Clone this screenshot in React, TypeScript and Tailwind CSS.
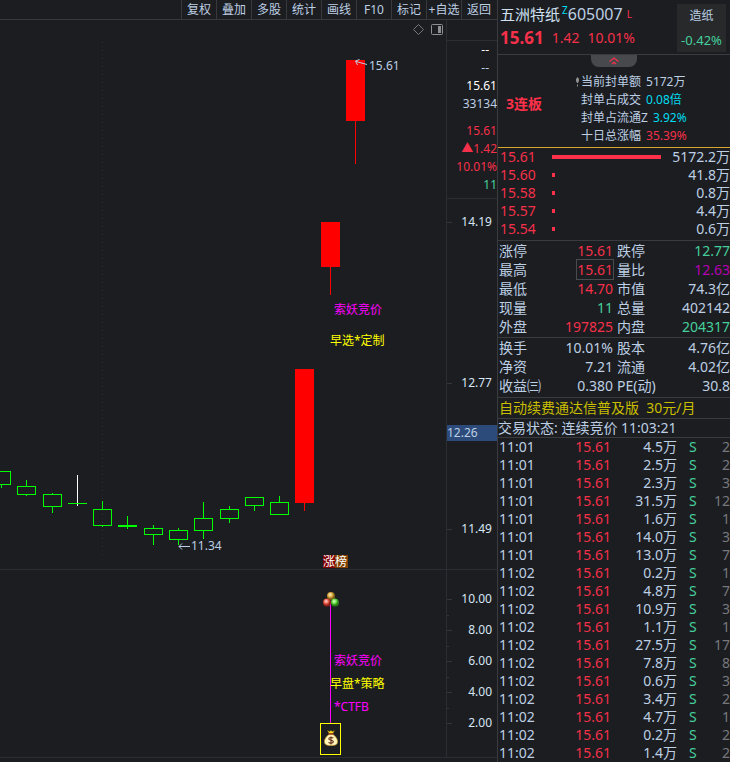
import { useState } from 'react';

const MENU = ['复权', '叠加', '多股', '统计', '画线', 'F10', '标记', '+自选', '返回'];

const RED = 'text-[#f5304a]';
const GREEN = 'text-[#45cf9c]';
const PLAIN = 'text-[#bccfe4]';

interface Candle {
  x: number;
  open: number;
  close: number;
  high: number;
  low: number;
  wick?: string;
}

// falling days, drawn hollow; open/close are the top and bottom of the body
const FALLING: Candle[] = [
  { x: 1, open: 471, close: 484, high: 471, low: 488 },
  { x: 26, open: 486, close: 494, high: 480, low: 496 },
  { x: 52, open: 494, close: 506, high: 493, low: 513 },
  { x: 77, open: 503, close: 503, high: 475, low: 506, wick: '#ffffff' },
  { x: 102, open: 509, close: 525, high: 501, low: 527 },
  { x: 127, open: 525, close: 526, high: 516, low: 529 },
  { x: 153, open: 528, close: 534, high: 525, low: 545 },
  { x: 178, open: 530, close: 539, high: 528, low: 545 },
  { x: 203, open: 518, close: 530, high: 502, low: 539 },
  { x: 229, open: 509, close: 518, high: 506, low: 523 },
  { x: 254, open: 497, close: 505, high: 497, low: 511 },
  { x: 279, open: 502, close: 514, high: 496, low: 514 },
];

const RISING: Candle[] = [
  { x: 304, open: 369, close: 503, high: 369, low: 511 },
  { x: 330, open: 222, close: 267, high: 222, low: 295 },
  { x: 355, open: 60, close: 121, high: 60, low: 164 },
];

const QUOTE = [
  { text: '--', color: 'text-white' },
  { text: '--', color: PLAIN },
  { text: '15.61', color: 'text-white' },
  { text: '33134', color: PLAIN },
  { text: '15.61', color: RED },
  { text: '▲1.42', color: RED },
  { text: '10.01%', color: RED },
  { text: '11', color: GREEN },
];

const ORDERS = [
  { price: '15.61', volume: '5172.2万', bar: 109 },
  { price: '15.60', volume: '41.8万', bar: 3 },
  { price: '15.58', volume: '0.8万', bar: 3 },
  { price: '15.57', volume: '4.4万', bar: 3 },
  { price: '15.54', volume: '0.6万', bar: 3 },
];

const LIMIT_INFO = [
  { label: '当前封单额', value: '5172万', color: PLAIN },
  { label: '封单占成交', value: '0.08倍', color: 'text-[#00dcf0]' },
  { label: '封单占流通Z', value: '3.92%', color: 'text-[#00dcf0]' },
  { label: '十日总涨幅', value: '35.39%', color: RED },
];

type Stat = [string, string, string, string, string, string];

const STATS_A: Stat[] = [
  ['涨停', '15.61', RED, '跌停', '12.77', GREEN],
  ['最高', '15.61', RED, '量比', '12.63', 'text-[#b400b4]'],
  ['最低', '14.70', RED, '市值', '74.3亿', PLAIN],
  ['现量', '11', GREEN, '总量', '402142', PLAIN],
  ['外盘', '197825', RED, '内盘', '204317', GREEN],
];

const STATS_B: Stat[] = [
  ['换手', '10.01%', PLAIN, '股本', '4.76亿', PLAIN],
  ['净资', '7.21', PLAIN, '流通', '4.02亿', PLAIN],
  ['收益㈢', '0.380', PLAIN, 'PE(动)', '30.8', PLAIN],
];

const TICKS = [
  ['11:01', '4.5万', '2'],
  ['11:01', '2.5万', '2'],
  ['11:01', '2.3万', '3'],
  ['11:01', '31.5万', '12'],
  ['11:01', '1.6万', '1'],
  ['11:01', '14.0万', '3'],
  ['11:01', '13.0万', '7'],
  ['11:02', '0.2万', '1'],
  ['11:02', '4.8万', '7'],
  ['11:02', '10.9万', '3'],
  ['11:02', '1.1万', '1'],
  ['11:02', '27.5万', '17'],
  ['11:02', '7.8万', '8'],
  ['11:02', '0.6万', '3'],
  ['11:02', '3.4万', '2'],
  ['11:02', '4.7万', '1'],
  ['11:02', '0.2万', '2'],
  ['11:02', '1.4万', '2'],
];

function FallingCandle({ c }: { c: Candle }) {
  const wick = c.wick || '#00ff00';
  return (
    <g stroke="#00ff00" fill="none">
      <path d={`M${c.x + 0.5} ${c.high}V${c.open}M${c.x + 0.5} ${c.close}V${c.low}`} stroke={wick} />
      {c.open === c.close ? (
        <>
          <path d={`M${c.x + 0.5} ${c.high}V${c.low}`} stroke={wick} />
          <path d={`M${c.x - 9} ${c.open + 0.5}h19`} />
        </>
      ) : (
        <rect x={c.x - 8.5} y={c.open + 0.5} width={18} height={c.close - c.open} />
      )}
    </g>
  );
}

function KLineChart() {
  return (
    <svg width="446" height="549" viewBox="0 20 446 549" className="shrink-0 text-xs" shapeRendering="crispEdges">
      <path d="M102.5 42V557" stroke="#2b2c31" strokeDasharray="1 3" />
      {FALLING.map((c) => (
        <FallingCandle key={c.x} c={c} />
      ))}
      {RISING.map((c) => (
        <g key={c.x}>
          <rect x={c.x - 9} y={c.open} width={19} height={c.close - c.open} fill="#ff0000" />
          <path d={`M${c.x + 0.5} ${c.close}V${c.low}`} stroke="#ff0000" />
        </g>
      ))}

      {/* high and low marks */}
      <g stroke="#bccfe4" fill="none" shapeRendering="auto">
        <path d="M367 64.5L356 61.5M359.5 59.5L355.5 61L357.5 65" />
        <path d="M179 546.5H190M182 543.5L179 546.5L182 549.5" />
      </g>
      <text x="369" y="70" fill="#bccfe4">15.61</text>
      <text x="191" y="550" fill="#bccfe4">11.34</text>

      <text x="334" y="314" fill="#ff00ff">索妖竞价</text>
      <text x="330" y="345" fill="#ffff00">早选*定制</text>

      <rect x="323" y="555" width="12" height="13" fill="#800000" />
      <rect x="335" y="555" width="13" height="13" fill="#804000" />
      <text x="323" y="566" fill="#ffffff">涨榜</text>
    </svg>
  );
}

function SignalChart() {
  return (
    <svg width="446" height="187" viewBox="0 570 446 187" className="shrink-0 text-xs">
      <defs>
        <radialGradient id="gold" cx="0.4" cy="0.35">
          <stop offset="0" stopColor="#fff4c8" />
          <stop offset="0.6" stopColor="#d8a840" />
          <stop offset="1" stopColor="#806018" />
        </radialGradient>
        <radialGradient id="red" cx="0.4" cy="0.35">
          <stop offset="0" stopColor="#ffe0dc" />
          <stop offset="0.6" stopColor="#e85848" />
          <stop offset="1" stopColor="#902018" />
        </radialGradient>
        <radialGradient id="green" cx="0.4" cy="0.35">
          <stop offset="0" stopColor="#e8ffd4" />
          <stop offset="0.6" stopColor="#60d840" />
          <stop offset="1" stopColor="#287c18" />
        </radialGradient>
      </defs>
      <path d="M330.5 604V723" stroke="#ff00ff" />
      <circle cx="331" cy="596" r="4" fill="url(#gold)" />
      <circle cx="327" cy="602.5" r="4" fill="url(#red)" />
      <circle cx="335" cy="602.5" r="4" fill="url(#green)" />

      <text x="334" y="665" fill="#ff00ff">索妖竞价</text>
      <text x="330" y="688" fill="#ffff00">早盘*策略</text>
      <text x="334" y="711" fill="#ff00ff">*CTFB</text>

      {/* money bag */}
      <rect x="320.5" y="723.5" width="20" height="31" fill="none" stroke="#ffff00" />
      <path d="M327.5 730.5L329 733.5H333L334.5 730.5L332.5 731.5L331 730.5L329.5 731.5Z" fill="#f8e020" stroke="#806010" strokeWidth="0.5" />
      <path d="M329 734.5H333C335.5 736 337.5 739 337.5 741.5C337.5 744.5 335.5 745.5 331 745.5C326.5 745.5 324.5 744.5 324.5 741.5C324.5 739 326.5 736 329 734.5Z" fill="#fff4bc" stroke="#d0a028" strokeWidth="0.7" />
      <path d="M328.5 734H333.5" stroke="#b03018" />
      <path d="M333.3 738.2C332.3 737.2 328.8 737.2 328.8 739C328.8 740.7 333.4 739.9 333.4 741.8C333.4 743.5 329.5 743.5 328.5 742.3M331 736.5V744.5" fill="none" stroke="#602818" strokeWidth="1.1" />
    </svg>
  );
}

function PriceAxis() {
  return (
    <svg width="50" height="370" viewBox="0 199 50 370" className="block text-xs">
      <path d="M0 222.5H5M0 383.5H5M0 529.5H5" stroke="#33343c" />
      <g fill="#d6e6f5" textAnchor="end">
        <text x="45" y="226">14.19</text>
        <text x="45" y="387">12.77</text>
        <text x="45" y="533">11.49</text>
      </g>
      <rect x="0" y="425" width="50" height="16" fill="#2c4a7a" />
      <text x="0" y="437" fill="#bccfe4">12.26</text>
    </svg>
  );
}

function SignalAxis() {
  return (
    <svg width="50" height="187" viewBox="0 570 50 187" className="block text-xs">
      {[10, 8, 6, 4, 2].map((v, i) => (
        <g key={v}>
          <path d={`M0 ${599.5 + i * 31}h5`} stroke="#33343c" />
          {i < 4 && <path d={`M0 ${615.5 + i * 31}h2`} stroke="#33343c" />}
          <text x="45" y={603 + i * 31} textAnchor="end" fill="#d6e6f5">
            {v.toFixed(2)}
          </text>
        </g>
      ))}
    </svg>
  );
}

function StatTable({ rows, boxed }: { rows: Stat[]; boxed?: string }) {
  return (
    <table className="w-full table-fixed border-collapse text-sm leading-[19px]">
      <tbody>
        {rows.map(([label, value, color, label2, value2, color2]) => (
          <tr key={label}>
            <th className="w-[46px] p-0 pl-px text-left font-normal whitespace-nowrap">{label}</th>
            <td className={`w-[69px] p-0 text-right ${color}`}>
              <span className={label === boxed ? 'outline outline-[#4a4b4e]' : ''}>{value}</span>
            </td>
            <th className="w-[50px] p-0 pl-1 text-left font-normal whitespace-nowrap">{label2}</th>
            <td className={`p-0 text-right ${color2}`}>{value2}</td>
          </tr>
        ))}
      </tbody>
    </table>
  );
}

export default function App() {
  const [open, setOpen] = useState(true);

  return (
    <div className="flex min-h-screen overflow-hidden bg-[#1c1d20] font-['Noto_Sans','Noto_Sans_CJK_SC',sans-serif] text-[#bccfe4]">
      <main className="min-w-0 flex-1">
        <nav className="flex h-5 justify-end border-b border-[#38393c] pr-px text-xs">
          {MENU.map((item) => (
            <button
              key={item}
              className="flex w-[35px] items-center justify-center border-l border-[#38393c] leading-4 whitespace-nowrap hover:text-white"
            >
              {item}
            </button>
          ))}
        </nav>

        <div className="flex border-b border-[#2c2d33]">
          <section className="relative flex min-w-0 flex-1 justify-end overflow-hidden">
            <KLineChart />
            <div className="absolute top-[3px] right-0.5 flex items-center gap-1.5">
              <button aria-label="标注">
                <svg width="13" height="13" viewBox="0 0 13 13" className="block" fill="none" stroke="#77787c">
                  <path d="M6.5 1.5L11.5 6.5L6.5 11.5L1.5 6.5Z" />
                </svg>
              </button>
              <button aria-label="侧栏">
                <svg width="13" height="13" viewBox="0 0 13 13" className="block" fill="none" stroke="#8e8f93">
                  <rect x="0.5" y="1.5" width="11" height="10" rx="1" />
                  <rect x="7" y="3" width="3" height="7" fill="#8e8f93" stroke="none" />
                </svg>
              </button>
            </div>
          </section>
          <aside className="w-[51px] shrink-0 border-l border-[#2c2d33]">
            <div className="h-[21px] border-b border-[#2c2d33]" />
            <ul className="border-b border-[#2c2d33] pb-1 text-right text-xs leading-[18px]">
              {QUOTE.map((q, i) => (
                <li
                  key={i}
                  className={`${q.color} ${i < 2 ? 'pr-2' : ''} ${i === 4 ? 'mt-[9px]' : ''} whitespace-nowrap`}
                >
                  {q.text}
                </li>
              ))}
            </ul>
            <PriceAxis />
          </aside>
        </div>

        <div className="flex border-b border-[#2c2d33]">
          <section className="flex min-w-0 flex-1 justify-end overflow-hidden">
            <SignalChart />
          </section>
          <aside className="w-[51px] shrink-0 border-l border-[#2c2d33]">
            <SignalAxis />
          </aside>
        </div>
      </main>

      <aside className="w-[233px] shrink-0 border-l border-[#3a3b3e]">
        <header className="flex h-[55px] justify-between border-b border-[#3a3b3e]">
          <div className="flex flex-col pt-1 pl-0.5">
            <h1 className="flex text-base leading-5">
              <span className="text-[15px] text-[#cfe0f2]">五洲特纸</span>
              <sup className="top-0 pl-0.5 text-[10px] leading-3 text-[#00dcf0]">Z</sup>
              <span>605007</span>
              <sup className="top-0 pt-1 pl-1 text-[10px] leading-3 text-[#f5304a]">L</sup>
            </h1>
            <div className="flex items-center gap-2 pt-0.5 text-sm leading-6 text-[#f5304a]">
              <strong className="text-[17px]">15.61</strong>
              <span>1.42</span>
              <span>10.01%</span>
            </div>
          </div>
          <a href="#sector" className="mt-1 mr-1 flex h-12 w-[49px] flex-col items-center bg-[#28292b] text-xs leading-6">
            <span>造纸</span>
            <span className="text-[13px] text-[#45cf9c]">-0.42%</span>
          </a>
        </header>

        <section className="relative flex h-[93px] border-b border-[#d9a531] pt-[18px]">
          <button
            aria-label="收起"
            onClick={() => setOpen(!open)}
            className="absolute top-0 left-[93px] flex h-3 w-[46px] items-center justify-center rounded-b-lg bg-[#48494c]"
          >
            <svg width="10" height="8" viewBox="0 0 10 8" fill="none" stroke="#f5304a" strokeWidth="1.2">
              <path d="M0.5 4.5L5 1L9.5 4.5M3 7L5 5.2L7 7" />
            </svg>
          </button>
          {open && (
            <>
              <strong className="w-[77px] pt-[21px] pl-2 text-sm leading-5 text-[#ff304a]">3连板</strong>
              <svg width="5" height="10" viewBox="0 0 5 10" className="mt-1 mr-px" fill="#8e8f93">
                <path d="M2.5 0L4 2V4L3 6H2L1 4V2ZM2 7.5H3V9.5H2Z" />
              </svg>
              <dl className="text-xs leading-[18px] whitespace-nowrap">
                {LIMIT_INFO.map((row) => (
                  <div key={row.label} className="flex gap-[5px]">
                    <dt>{row.label}</dt>
                    <dd className={row.color}>{row.value}</dd>
                  </div>
                ))}
              </dl>
            </>
          )}
        </section>

        {/* Bids */}
        <section className="border-b border-[#3a3b3e] pb-0.5">
          <table className="w-full table-fixed border-collapse text-sm leading-[18px]">
            <tbody>
              {ORDERS.map((o) => (
                <tr key={o.price}>
                  <td className="w-[54px] p-0 pl-0.5 text-[#f5304a]">{o.price}</td>
                  <td className="w-[110px] p-0 align-middle">
                    <div className="h-1 bg-[#ff304a]" style={{ width: o.bar }} />
                  </td>
                  <td className="p-0 text-right">{o.volume}</td>
                </tr>
              ))}
            </tbody>
          </table>
        </section>

        <section className="border-b border-[#3a3b3e] pb-px">
          <StatTable rows={STATS_A} boxed="最高" />
        </section>
        <section className="border-b border-[#3a3b3e] pb-0.5">
          <StatTable rows={STATS_B} />
        </section>

        <a href="#renew" className="block border-b border-[#3a3b3e] pl-px text-sm leading-5 text-[#c8be00]">
          自动续费通达信普及版&nbsp; 30元/月
        </a>
        <p className="border-b border-[#3a3b3e] text-sm leading-[18px]">交易状态: 连续竞价 11:03:21</p>

        {/* Trades */}
        <table className="w-full table-fixed border-collapse text-sm leading-[18px]">
          <tbody>
            {TICKS.map(([time, volume, count], i) => (
              <tr key={i}>
                <td className="w-[50px] p-0 pl-px">{time}</td>
                <td className="w-[63px] p-0 text-right text-[#f5304a]">15.61</td>
                <td className="w-[66px] p-0 text-right">{volume}</td>
                <td className="w-[24px] p-0 pl-3 text-[#45cf9c]">S</td>
                <td className="p-0 text-right text-[#77787c]">{count}</td>
              </tr>
            ))}
          </tbody>
        </table>
      </aside>
    </div>
  );
}
